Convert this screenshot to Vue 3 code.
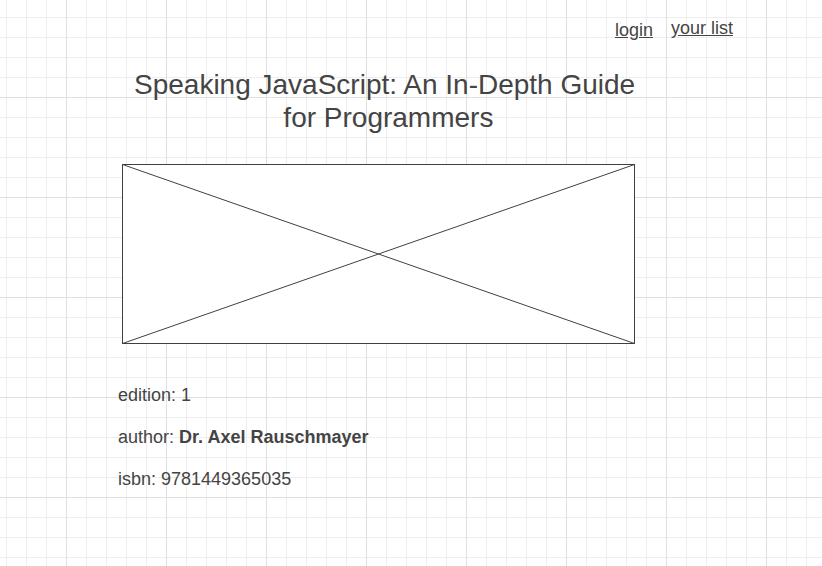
<template>
  <div class="page">
    <nav class="nav" aria-label="Account">
      <a class="login" href="#login">login</a>
      <a class="list" href="#list">your list</a>
    </nav>
    <main>
      <h1>Speaking JavaScript: An In-Depth Guide<br />&nbsp;for Programmers</h1>
      <svg class="cover" viewBox="0 0 513 180" preserveAspectRatio="none" role="img" aria-label="Book cover">
        <rect x="0.5" y="0.5" width="512" height="179" fill="#fff" />
        <path d="M0.5 0.5L512.5 179.5M512.5 0.5L0.5 179.5" />
      </svg>
      <div class="details">
        <p>edition: 1</p>
        <p>author: <strong>Dr. Axel Rauschmayer</strong></p>
        <p>isbn: 9781449365035</p>
      </div>
    </main>
  </div>
</template>

<script setup>
</script>

<style>
body {
  background-color: #fff;
  background-image:
    linear-gradient(to right, #e0e0e0 1px, transparent 1px),
    linear-gradient(to bottom, #e0e0e0 1px, transparent 1px),
    linear-gradient(to right, #eee 1px, transparent 1px),
    linear-gradient(to bottom, #eee 1px, transparent 1px);
  background-size: 100px 100px, 100px 100px, 20px 20px, 20px 20px;
  background-position: 66px 97px, 66px 97px, 6px 17px, 6px 17px;
}
</style>

<style scoped>
.page {
  font-family: "Liberation Sans", Arial, sans-serif;
  font-size: 18px;
  line-height: 22px;
  color: #444;
}
.nav {
  display: flex;
  justify-content: flex-end;
  gap: 18px;
  padding: 17px 89px 0 0;
}
.nav a {
  color: inherit;
}
.login {
  padding-top: 2px;
}
main {
  padding: 27px 187px 0 118px;
}
h1 {
  margin: 0;
  padding-left: 16px;
  font-size: 28px;
  line-height: 33px;
  font-weight: 400;
  text-align: center;
  white-space: nowrap;
}
.cover {
  display: block;
  width: calc(100% - 4px);
  height: 180px;
  margin: 30px 0 0 4px;
  fill: none;
  stroke: #404040;
}
.details {
  display: grid;
  gap: 20px;
  padding-top: 40px;
}
p {
  margin: 0;
}
</style>
